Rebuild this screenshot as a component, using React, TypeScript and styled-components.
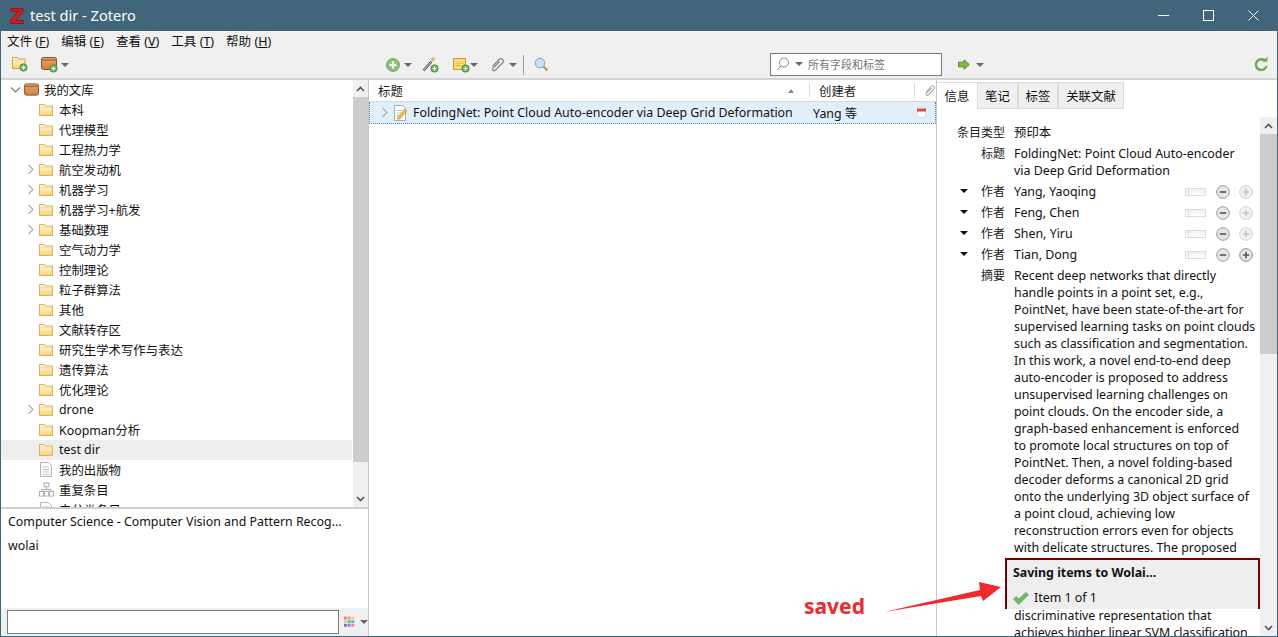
import styled, { createGlobalStyle } from 'styled-components'
import { ReactNode } from 'react'

const font = `"Noto Sans", "Noto Sans CJK SC", sans-serif`

const Global = createGlobalStyle`
  html, body { margin: 0; padding: 0; height: 100%; overflow: hidden; }
  * { box-sizing: border-box; }
  #root { height: 100%; }
`

const Window = styled.div`
  position: relative;
  width: 1278px;
  height: 637px;
  display: flex;
  flex-direction: column;
  overflow: hidden;
  background: #f0f0f0;
  border: 1px solid #41667b;
  border-top: 0;
  font-family: ${font};
  font-size: 12.4px;
  color: #111;
`

const TitleBar = styled.div`
  height: 31px;
  margin: 0 -1px;
  flex: none;
  display: flex;
  align-items: center;
  background: #41667b;
  color: #fff;
  font-size: 14.6px;
  padding-left: 10px;
`

const TitleText = styled.span`
  margin-left: 6px;
  padding-bottom: 2px;
  flex: 1;
`

const WinButtons = styled.div`
  display: flex;
  align-items: center;
  gap: 34px;
  padding-right: 19px;
`

const MenuBar = styled.div`
  height: 20px;
  flex: none;
  display: flex;
  align-items: center;
  padding-left: 6px;
  padding-bottom: 2px;
  gap: 12px;
  font-size: 12.5px;
  background: #f0f0f0;
`

const MenuKey = styled.span`
  text-decoration: underline;
  text-underline-offset: 1px;
`

const Toolbar = styled.div`
  height: 29px;
  flex: none;
  display: flex;
  align-items: center;
  border-bottom: 2px solid #d4d4d4;
`

const ToolGroup = styled.div<{ $w: number }>`
  width: ${p => p.$w}px;
  flex: none;
  display: flex;
  align-items: center;
  height: 100%;
`

const Spacer = styled.div<{ $w: number }>`
  width: ${p => p.$w}px;
  flex: none;
`

const Caret = styled.span`
  display: inline-block;
  width: 0;
  height: 0;
  border-left: 4px solid transparent;
  border-right: 4px solid transparent;
  border-top: 4px solid #666;
  flex: none;
`

const ToolSep = styled.div`
  width: 1px;
  height: 20px;
  background: #9a9a9a;
  flex: none;
`

const SearchBox = styled.div`
  width: 172px;
  height: 23px;
  flex: none;
  background: #fff;
  border: 1px solid #7a7a7a;
  display: flex;
  align-items: center;
  padding-left: 5px;
  padding-bottom: 1px;
  gap: 5px;
  color: #777;
  font-size: 11px;
`

const Panes = styled.div`
  flex: 1;
  min-height: 0;
  display: flex;
`

const LeftPane = styled.div`
  width: 368px;
  flex: none;
  display: flex;
  flex-direction: column;
  border-right: 1px solid #c8c8c8;
  background: #fff;
`

const TreeWrap = styled.div`
  height: 429px;
  flex: none;
  display: flex;
  overflow: hidden;
  border-bottom: 2px solid #d0d0d0;
`

const Tree = styled.div`
  flex: 1;
  min-width: 0;
  overflow: hidden;
  padding-right: 1px;
`

const TreeRow = styled.div<{ $selected?: boolean; $indent: number }>`
  height: 20px;
  display: flex;
  align-items: center;
  padding-left: ${p => p.$indent}px;
  padding-bottom: 1px;
  background: ${p => (p.$selected ? '#eeeeee' : 'transparent')};
  white-space: nowrap;
  font-size: 12.4px;
`

const Twisty = styled.span`
  width: 14px;
  height: 12px;
  flex: none;
  display: flex;
  align-items: center;
`

const RowIcon = styled.span`
  width: 15px;
  height: 14px;
  flex: none;
  margin-right: 5px;
  display: flex;
  align-items: center;
`

const Scrollbar = styled.div<{ $w: number }>`
  width: ${p => p.$w}px;
  flex: none;
  background: #f0f0f0;
  display: flex;
  flex-direction: column;
`

const ScrollArrow = styled.div`
  height: 17px;
  flex: none;
  display: flex;
  align-items: center;
  justify-content: center;
`

const ScrollTrack = styled.div`
  flex: 1;
  min-height: 0;
`

const ScrollThumb = styled.div<{ $h: number }>`
  height: ${p => p.$h}px;
  flex: none;
  background: #cdcdcd;
`

const TagPane = styled.div`
  flex: 1;
  min-height: 0;
  display: flex;
  flex-direction: column;
`

const TagList = styled.div`
  flex: 1;
  padding: 0 7px;
  font-size: 12.4px;
`

const TagItem = styled.div`
  height: 24px;
  display: flex;
  align-items: center;
  white-space: nowrap;
`

const TagFooter = styled.div`
  height: 28px;
  flex: none;
  background: #f0f0f0;
  display: flex;
  align-items: center;
  padding-left: 6px;
  gap: 5px;
`

const TagInput = styled.div`
  width: 332px;
  height: 24px;
  background: #fff;
  border: 1px solid #7a7a7a;
  flex: none;
`

const MiddlePane = styled.div`
  width: 568px;
  flex: none;
  background: #fff;
  border-right: 1px solid #c8c8c8;
  display: flex;
  flex-direction: column;
`

const ColHeader = styled.div`
  height: 22px;
  flex: none;
  display: flex;
  align-items: stretch;
  border-bottom: 1px solid #d8d8d8;
  font-size: 12.4px;
  color: #222;
`

const HeadCell = styled.div<{ $w?: number }>`
  ${p => (p.$w ? `width: ${p.$w}px; flex: none;` : 'flex: 1;')}
  display: flex;
  align-items: center;
  padding-left: 9px;
  position: relative;
`

const HeadDivider = styled.div`
  width: 1px;
  margin: 3px 0;
  background: #dcdcdc;
  flex: none;
`

const SortMark = styled.span`
  margin-left: auto;
  margin-right: 15px;
  width: 0;
  height: 0;
  border-left: 3.5px solid transparent;
  border-right: 3.5px solid transparent;
  border-bottom: 4px solid #888;
`

const ItemRow = styled.div`
  height: 22px;
  flex: none;
  display: flex;
  align-items: center;
  background: #e1effa;
  border: 1px dotted #3a8ac4;
  border-top: 0;
  font-size: 12.4px;
  white-space: nowrap;
`

const ItemTitle = styled.span`
  width: 400px;
  flex: none;
  margin-left: 5px;
`

const ItemCreator = styled.span`
  flex: 1;
`

const RightPane = styled.div`
  flex: 1;
  min-width: 0;
  background: #fff;
  display: flex;
  flex-direction: column;
`

const Tabs = styled.div`
  height: 29px;
  flex: none;
  display: flex;
  align-items: flex-end;
`

const Tab = styled.div<{ $active?: boolean; $w: number }>`
  width: ${p => p.$w}px;
  height: 27px;
  flex: none;
  display: flex;
  align-items: center;
  justify-content: center;
  font-size: 12.4px;
  background: ${p => (p.$active ? '#fff' : '#f0f0f0')};
  border: 1px solid #dcdcdc;
  border-left-width: ${p => (p.$active ? 0 : 1)}px;
  border-bottom: ${p => (p.$active ? 0 : '1px solid #dcdcdc')};
  border-right-width: ${p => (p.$active ? 0 : 1)}px;
`

const InfoWrap = styled.div`
  flex: 1;
  min-height: 0;
  display: flex;
  padding-top: 8px;
`

const InfoBody = styled.div`
  flex: 1;
  min-width: 0;
  overflow: hidden;
  padding-top: 7px;
  font-size: 12.4px;
`

const Field = styled.div<{ $h?: number }>`
  display: flex;
  min-height: ${p => p.$h ?? 21}px;
  align-items: flex-start;
`

const FieldLabel = styled.div`
  width: 68px;
  flex: none;
  text-align: right;
  color: #222;
  font-size: 12px;
  line-height: 17px;
`

const FieldToggle = styled.span`
  position: relative;
`

const ToggleMark = styled.span`
  position: absolute;
  left: -21px;
  top: 6px;
  width: 0;
  height: 0;
  border-left: 4px solid transparent;
  border-right: 4px solid transparent;
  border-top: 4px solid #111;
`

const FieldValue = styled.div`
  flex: 1;
  margin-left: 9px;
  line-height: 17px;
  min-width: 0;
`

const CreatorValue = styled(FieldValue)`
  display: flex;
  align-items: center;
  height: 17px;
  padding-right: 7px;
`

const CreatorName = styled.span`
  flex: 1;
`

const ModeSwitch = styled.span`
  width: 21px;
  height: 8px;
  flex: none;
  border: 1px solid #dcdcdc;
  background: linear-gradient(#f0f0f0, #fff);
  margin-right: 10px;
  position: relative;

  &::before {
    content: '';
    position: absolute;
    left: 2px;
    top: 0;
    width: 1px;
    height: 6px;
    background: #dcdcdc;
  }
`

const RoundButton = styled.span`
  width: 14px;
  height: 14px;
  border-radius: 50%;
  flex: none;
  display: flex;
  align-items: center;
  justify-content: center;
`

const Abstract = styled(FieldValue)`
  white-space: nowrap;
`

const AbstractGap = styled.div`
  height: 51px;
`

const Popup = styled.div`
  position: absolute;
  left: 1004px;
  top: 558px;
  width: 255px;
  height: 51px;
  background: #eeeeee;
  border: 2px solid #7a0000;
  border-bottom: 0;
  padding: 4px 6px;
  font-size: 12.4px;
`

const PopupTitle = styled.div`
  font-weight: 700;
  line-height: 18px;
`

const PopupRow = styled.div`
  display: flex;
  align-items: center;
  margin-top: 8px;
  gap: 5px;
  line-height: 16px;
`

const SavedNote = styled.div`
  position: absolute;
  left: 803px;
  top: 592px;
  color: #ee2a2e;
  font-size: 21px;
  font-weight: 700;
  line-height: 28px;
`

const Arrow = styled.svg`
  position: absolute;
  left: 879px;
  top: 578px;
`

const Chevron = ({ down }: { down?: boolean }) => (
  <svg width="11" height="11" viewBox="0 0 11 11" fill="none" stroke={down ? '#777' : '#aaa'} strokeWidth="1.1">
    {down ? <path d="M1 3.5l4.5 4.5 4.5-4.5" /> : <path d="M3.5 1l4.5 4.5-4.5 4.5" />}
  </svg>
)

const FolderGradient = () => (
  <svg width="0" height="0" style={{ position: 'absolute' }}>
    <defs>
      <linearGradient id="folderFill" x1="0" y1="0" x2="0" y2="1">
        <stop offset="0" stopColor="#fffbe8" />
        <stop offset="1" stopColor="#fbd36a" />
      </linearGradient>
      <linearGradient id="boxFill" x1="0" y1="0" x2="0" y2="1">
        <stop offset="0" stopColor="#e9a66c" />
        <stop offset="1" stopColor="#cf7f42" />
      </linearGradient>
    </defs>
  </svg>
)

const Folder = () => (
  <svg width="14" height="12" viewBox="0 0 14 12">
    <path d="M.5.5h5l1 1.500h7v9.500H.5z" fill="url(#folderFill)" stroke="#dcae66" />
    <path d="M1 3h12" stroke="#f5d99a" />
  </svg>
)

const LibraryBox = () => (
  <svg width="16" height="13" viewBox="0 0 16 13">
    <rect x=".5" y=".5" width="15" height="12" rx="2" fill="url(#boxFill)" stroke="#85552a" />
    <path d="M1 3h14" stroke="#85552a" />
  </svg>
)

const DocIcon = () => (
  <svg width="14" height="15" viewBox="0 0 14 15" fill="#fff" stroke="#b5b5b5">
    <path d="M1.500.5h8l3 3v11h-11z" />
    <path d="M3.500 5h7M3.500 7.500h7M3.500 10h7M3.500 12.500h7" strokeWidth=".8" />
  </svg>
)

const DupIcon = () => (
  <svg width="16" height="15" viewBox="0 0 16 15" fill="#fff" stroke="#aaa">
    <rect x="5.500" y=".5" width="5" height="4" />
    <path d="M8 4.500v3M3 9.500V7.500h10v2" />
    <rect x=".5" y="9.500" width="4.500" height="5" />
    <rect x="5.800" y="9.500" width="4.500" height="5" />
    <rect x="11" y="9.500" width="4.500" height="5" />
  </svg>
)

const PlusBadge = ({ x, y }: { x: number; y: number }) => (
  <g>
    <circle cx={x} cy={y} r="3.700" fill="#6cb35a" stroke="#3e7f35" strokeWidth=".7" />
    <path d={`M${x - 2} ${y}h4M${x} ${y - 2}v4`} stroke="#fff" strokeWidth="1.200" />
  </g>
)

const NewCollectionIcon = () => (
  <svg width="16" height="15" viewBox="0 0 16 15">
    <path d="M.5.5h5l1 1.500h6.500v9.500H.5z" fill="url(#folderFill)" stroke="#c9a24f" />
    <path d="M1 3h12" stroke="#f0d48a" />
    <PlusBadge x={11.500} y={10.500} />
  </svg>
)

const NewLibraryIcon = () => (
  <svg width="20" height="16" viewBox="0 0 20 16">
    <rect x=".5" y=".5" width="15" height="12" rx="2" fill="url(#boxFill)" stroke="#85552a" />
    <path d="M1 3h14" stroke="#85552a" />
    <PlusBadge x={12.500} y={11.500} />
  </svg>
)

const NewItemIcon = () => (
  <svg width="14" height="14" viewBox="0 0 14 14">
    <circle cx="7" cy="7" r="6.300" fill="#8ec97a" stroke="#5a9a4a" />
    <path d="M3.500 7h7M7 3.500v7" stroke="#fff" strokeWidth="2" />
  </svg>
)

const WandIcon = () => (
  <svg width="17" height="17" viewBox="0 0 17 17">
    <path d="M1.500 14.500l8-9" stroke="#444" strokeWidth="2.400" />
    <path d="M1.500 14.500l8-9" stroke="#ddd" strokeWidth="1" />
    <path d="M11 .5l.8 1.800 1.800.3-1.400 1.200.4 1.800-1.600-.9-1.600.9.4-1.800-1.400-1.200 1.800-.3z" fill="#e8b93a" />
    <PlusBadge x={12.500} y={12.500} />
  </svg>
)

const NoteIcon = () => (
  <svg width="17" height="16" viewBox="0 0 17 16">
    <rect x=".5" y="1.500" width="12" height="11" fill="#fbdc6c" stroke="#cf9a3c" />
    <path d="M2.500 6h8M2.500 8.500h6" stroke="#e9b54a" />
    <PlusBadge x={12.500} y={11.500} />
  </svg>
)

const ClipIcon = ({ size = 15, color = '#888' }: { size?: number; color?: string }) => (
  <svg width={size} height={size} viewBox="0 0 15 15" fill="none" stroke={color} strokeWidth="1.300">
    <path d="M2.500 9.500l6.500-7a2.400 2.400 0 0 1 3.500 3.400l-7.200 7.300a1.500 1.500 0 0 1-2.200-2.100l6.500-6.600" />
  </svg>
)

const LensIcon = () => (
  <svg width="15" height="15" viewBox="0 0 15 15">
    <path d="M9 9l4.500 4.500" stroke="#c99452" strokeWidth="2.400" />
    <circle cx="6" cy="6" r="4.800" fill="#c7e0f5" stroke="#7fa5c8" />
  </svg>
)

const SearchGlass = () => (
  <svg width="14" height="14" viewBox="0 0 14 14" fill="none" stroke="#888" strokeWidth="1">
    <circle cx="8" cy="5.500" r="4.500" />
    <path d="M4.800 9L1.500 12.800" />
  </svg>
)

const GoArrow = () => (
  <svg width="12" height="11" viewBox="0 0 12 11">
    <path d="M.5 3.200h5.500V.8l5.300 4.700-5.300 4.700V7.800H.5z" fill="#86b83c" stroke="#57892a" />
  </svg>
)

const SyncIcon = () => (
  <svg width="14" height="15" viewBox="0 0 14 15" fill="none">
    <path d="M11.500 4.200A5.400 5.400 0 1 0 12.500 9" stroke="#69ab55" strokeWidth="2.400" />
    <path d="M8 4.500h5.500V0z" fill="#69ab55" />
  </svg>
)

const ZoteroLogo = () => (
  <svg width="14" height="16" viewBox="0 0 14 16">
    <path d="M1 .5h12v3L6 12.500h7.300v3H.5v-3L7.500 3.500H1z" fill="#cf1b22" stroke="#7d0e12" strokeWidth=".7" />
  </svg>
)

const ItemDocIcon = () => (
  <svg width="15" height="16" viewBox="0 0 15 16">
    <path d="M1.500.5h8l3 3v12h-11z" fill="#fafafa" stroke="#aaa" />
    <path d="M3.500 5.500h6M3.500 8h5M3.500 10.500h4" stroke="#bbb" strokeWidth=".8" />
    <path d="M5 12l7-8 2 1.800-7 8-2.500.6z" fill="#efb93e" stroke="#b88520" strokeWidth=".5" />
  </svg>
)

const PdfMark = () => (
  <svg width="9" height="11" viewBox="0 0 9 11">
    <rect x=".5" y=".5" width="8" height="10" fill="#fff" stroke="#ddd" />
    <rect x="0" y="1.500" width="9" height="3" fill="#e2453f" />
  </svg>
)

const RoundMinus = () => (
  <RoundButton>
    <svg width="14" height="14" viewBox="0 0 14 14">
      <circle cx="7" cy="7" r="6.300" fill="#e6e6e6" stroke="#9a9a9a" />
      <path d="M3.800 7h6.400" stroke="#666" strokeWidth="1.800" />
    </svg>
  </RoundButton>
)

const RoundPlus = ({ on }: { on?: boolean }) => (
  <RoundButton>
    <svg width="14" height="14" viewBox="0 0 14 14">
      <circle cx="7" cy="7" r="6.300" fill={on ? '#e8e8e8' : '#f3f3f3'} stroke={on ? '#8a8a8a' : '#cfcfcf'} />
      <path d="M3.800 7h6.400M7 3.800v6.400" stroke={on ? '#555' : '#c4c4c4'} strokeWidth="1.600" />
    </svg>
  </RoundButton>
)

const TagColors = () => {
  const colors = ['#f47c7c', '#f4a07c', '#f4d06c', '#c8e08c', '#5cc46c', '#5cb4e4', '#5c7cc4', '#a47cd4', '#f47cc4']
  return (
    <svg width="12" height="12" viewBox="0 0 12 12">
      {colors.map((c, i) => (
        <rect key={c} x={(i % 3) * 4} y={Math.floor(i / 3) * 4} width="3.200" height="3.200" fill={c} />
      ))}
    </svg>
  )
}

const CheckIcon = () => (
  <svg width="16" height="13" viewBox="0 0 16 13">
    <path d="M.5 7l2.800-2.500 2.500 2.600L12.800.5 15.500 2.800 5.800 12.500z" fill="#6fbb6b" stroke="#4e9a50" strokeWidth=".6" />
  </svg>
)

type Coll = { name: string; arrow?: boolean; selected?: boolean; icon?: ReactNode }

const collections: Coll[] = [
  { name: '本科' },
  { name: '代理模型' },
  { name: '工程热力学' },
  { name: '航空发动机', arrow: true },
  { name: '机器学习', arrow: true },
  { name: '机器学习+航发', arrow: true },
  { name: '基础数理', arrow: true },
  { name: '空气动力学' },
  { name: '控制理论' },
  { name: '粒子群算法' },
  { name: '其他' },
  { name: '文献转存区' },
  { name: '研究生学术写作与表达' },
  { name: '遗传算法' },
  { name: '优化理论' },
  { name: 'drone', arrow: true },
  { name: 'Koopman分析' },
  { name: 'test dir', selected: true },
  { name: '我的出版物', icon: <DocIcon /> },
  { name: '重复条目', icon: <DupIcon /> },
  { name: '未分类条目', icon: <DocIcon /> },
]

const authors = ['Yang, Yaoqing', 'Feng, Chen', 'Shen, Yiru', 'Tian, Dong']

const abstractLines = [
  'Recent deep networks that directly',
  'handle points in a point set, e.g.,',
  'PointNet, have been state-of-the-art for',
  'supervised learning tasks on point clouds',
  'such as classification and segmentation.',
  'In this work, a novel end-to-end deep',
  'auto-encoder is proposed to address',
  'unsupervised learning challenges on',
  'point clouds. On the encoder side, a',
  'graph-based enhancement is enforced',
  'to promote local structures on top of',
  'PointNet. Then, a novel folding-based',
  'decoder deforms a canonical 2D grid',
  'onto the underlying 3D object surface of',
  'a point cloud, achieving low',
  'reconstruction errors even for objects',
  'with delicate structures. The proposed',
]

const abstractTail = ['discriminative representation that', 'achieves higher linear SVM classification']

const menus: [string, string][] = [['文件', 'F'], ['编辑', 'E'], ['查看', 'V'], ['工具', 'T'], ['帮助', 'H']]

export default function App() {
  return (
    <>
      <Global />
      <FolderGradient />
      <Window>
        <TitleBar>
          <ZoteroLogo />
          <TitleText>test dir - Zotero</TitleText>
          <WinButtons>
            <svg width="11" height="11" viewBox="0 0 11 11" stroke="#fff"><path d="M0 5.500h11" /></svg>
            <svg width="11" height="11" viewBox="0 0 11 11" stroke="#fff" fill="none"><rect x=".5" y=".5" width="10" height="10" /></svg>
            <svg width="11" height="11" viewBox="0 0 11 11" stroke="#fff"><path d="M.5.5l10 10M10.500.5l-10 10" /></svg>
          </WinButtons>
        </TitleBar>
        <MenuBar>
          {menus.map(([label, key]) => (
            <span key={key}>
              {label} (<MenuKey>{key}</MenuKey>)
            </span>
          ))}
        </MenuBar>
        <Toolbar>
          <ToolGroup $w={368}>
            <Spacer $w={11} />
            <NewCollectionIcon />
            <Spacer $w={13} />
            <NewLibraryIcon />
            <Caret />
          </ToolGroup>
          <ToolGroup $w={911}>
            <Spacer $w={17} />
            <NewItemIcon />
            <Spacer $w={4} />
            <Caret />
            <Spacer $w={10} />
            <WandIcon />
            <Spacer $w={14} />
            <NoteIcon />
            <Caret />
            <Spacer $w={12} />
            <ClipIcon />
            <Spacer $w={4} />
            <Caret />
            <Spacer $w={6} />
            <ToolSep />
            <Spacer $w={10} />
            <LensIcon />
            <Spacer $w={221} />
            <SearchBox>
              <SearchGlass />
              <Caret />
              所有字段和标签
            </SearchBox>
            <Spacer $w={16} />
            <GoArrow />
            <Spacer $w={6} />
            <Caret />
            <Spacer $w={270} />
            <SyncIcon />
          </ToolGroup>
        </Toolbar>
        <Panes>
          <LeftPane>
            <TreeWrap>
              <Tree>
                <TreeRow $indent={9}>
                  <Twisty><Chevron down /></Twisty>
                  <RowIcon><LibraryBox /></RowIcon>
                  我的文库
                </TreeRow>
                {collections.map(c => (
                  <TreeRow key={c.name} $indent={24} $selected={c.selected}>
                    <Twisty>{c.arrow && <Chevron />}</Twisty>
                    <RowIcon>{c.icon ?? <Folder />}</RowIcon>
                    {c.name}
                  </TreeRow>
                ))}
              </Tree>
              <Scrollbar $w={15}>
                <ScrollArrow>
                  <svg width="9" height="6" viewBox="0 0 9 6" fill="none" stroke="#555" strokeWidth="1.600"><path d="M1 5l3.500-3.500L8 5" /></svg>
                </ScrollArrow>
                <ScrollThumb $h={365} />
                <ScrollTrack />
                <ScrollArrow>
                  <svg width="9" height="6" viewBox="0 0 9 6" fill="none" stroke="#555" strokeWidth="1.600"><path d="M1 1l3.500 3.500L8 1" /></svg>
                </ScrollArrow>
              </Scrollbar>
            </TreeWrap>
            <TagPane>
              <TagList>
                <TagItem>Computer Science - Computer Vision and Pattern Recog...</TagItem>
                <TagItem>wolai</TagItem>
              </TagList>
              <TagFooter>
                <TagInput />
                <TagColors />
                <Caret />
              </TagFooter>
            </TagPane>
          </LeftPane>
          <MiddlePane>
            <ColHeader>
              <HeadCell>标题<SortMark /></HeadCell>
              <HeadDivider />
              <HeadCell $w={104}>创建者</HeadCell>
              <HeadDivider />
              <HeadCell $w={21}><ClipIcon size={13} color="#aaa" /></HeadCell>
            </ColHeader>
            <ItemRow>
              <Spacer $w={9} />
              <Chevron />
              <Spacer $w={3} />
              <ItemDocIcon />
              <ItemTitle>FoldingNet: Point Cloud Auto-encoder via Deep Grid Deformation</ItemTitle>
              <ItemCreator>Yang 等</ItemCreator>
              <PdfMark />
              <Spacer $w={9} />
            </ItemRow>
          </MiddlePane>
          <RightPane>
            <Tabs>
              <Tab $active $w={40}>信息</Tab>
              <Tab $w={41}>笔记</Tab>
              <Tab $w={40}>标签</Tab>
              <Tab $w={66}>关联文献</Tab>
            </Tabs>
            <InfoWrap>
              <InfoBody>
                <Field>
                  <FieldLabel>条目类型</FieldLabel>
                  <FieldValue>预印本</FieldValue>
                </Field>
                <Field $h={38}>
                  <FieldLabel>标题</FieldLabel>
                  <FieldValue>
                    FoldingNet: Point Cloud Auto-encoder<br />via Deep Grid Deformation
                  </FieldValue>
                </Field>
                {authors.map((a, i) => (
                  <Field key={a}>
                    <FieldLabel>
                      <FieldToggle><ToggleMark />作者</FieldToggle>
                    </FieldLabel>
                    <CreatorValue>
                      <CreatorName>{a}</CreatorName>
                      <ModeSwitch />
                      <RoundMinus />
                      <Spacer $w={9} />
                      <RoundPlus on={i === authors.length - 1} />
                    </CreatorValue>
                  </Field>
                ))}
                <Field>
                  <FieldLabel>摘要</FieldLabel>
                  <Abstract>
                    {abstractLines.map(l => <div key={l}>{l}</div>)}
                    <AbstractGap />
                    {abstractTail.map(l => <div key={l}>{l}</div>)}
                  </Abstract>
                </Field>
              </InfoBody>
              <Scrollbar $w={17}>
                <ScrollArrow>
                  <svg width="9" height="6" viewBox="0 0 9 6" fill="none" stroke="#555" strokeWidth="1.600"><path d="M1 5l3.500-3.500L8 5" /></svg>
                </ScrollArrow>
                <ScrollThumb $h={220} />
                <ScrollTrack />
                <ScrollArrow>
                  <svg width="9" height="6" viewBox="0 0 9 6" fill="none" stroke="#555" strokeWidth="1.600"><path d="M1 1l3.500 3.500L8 1" /></svg>
                </ScrollArrow>
              </Scrollbar>
            </InfoWrap>
          </RightPane>
        </Panes>
        <Popup>
          <PopupTitle>Saving items to Wolai...</PopupTitle>
          <PopupRow>
            <CheckIcon />
            Item 1 of 1
          </PopupRow>
        </Popup>
        <SavedNote>saved</SavedNote>
        <Arrow width="124" height="40" viewBox="0 0 124 40">
          <path d="M4 34L100 12 99 4 121 9 103 23 101 18z" fill="#ee2a2e" />
        </Arrow>
      </Window>
    </>
  )
}
